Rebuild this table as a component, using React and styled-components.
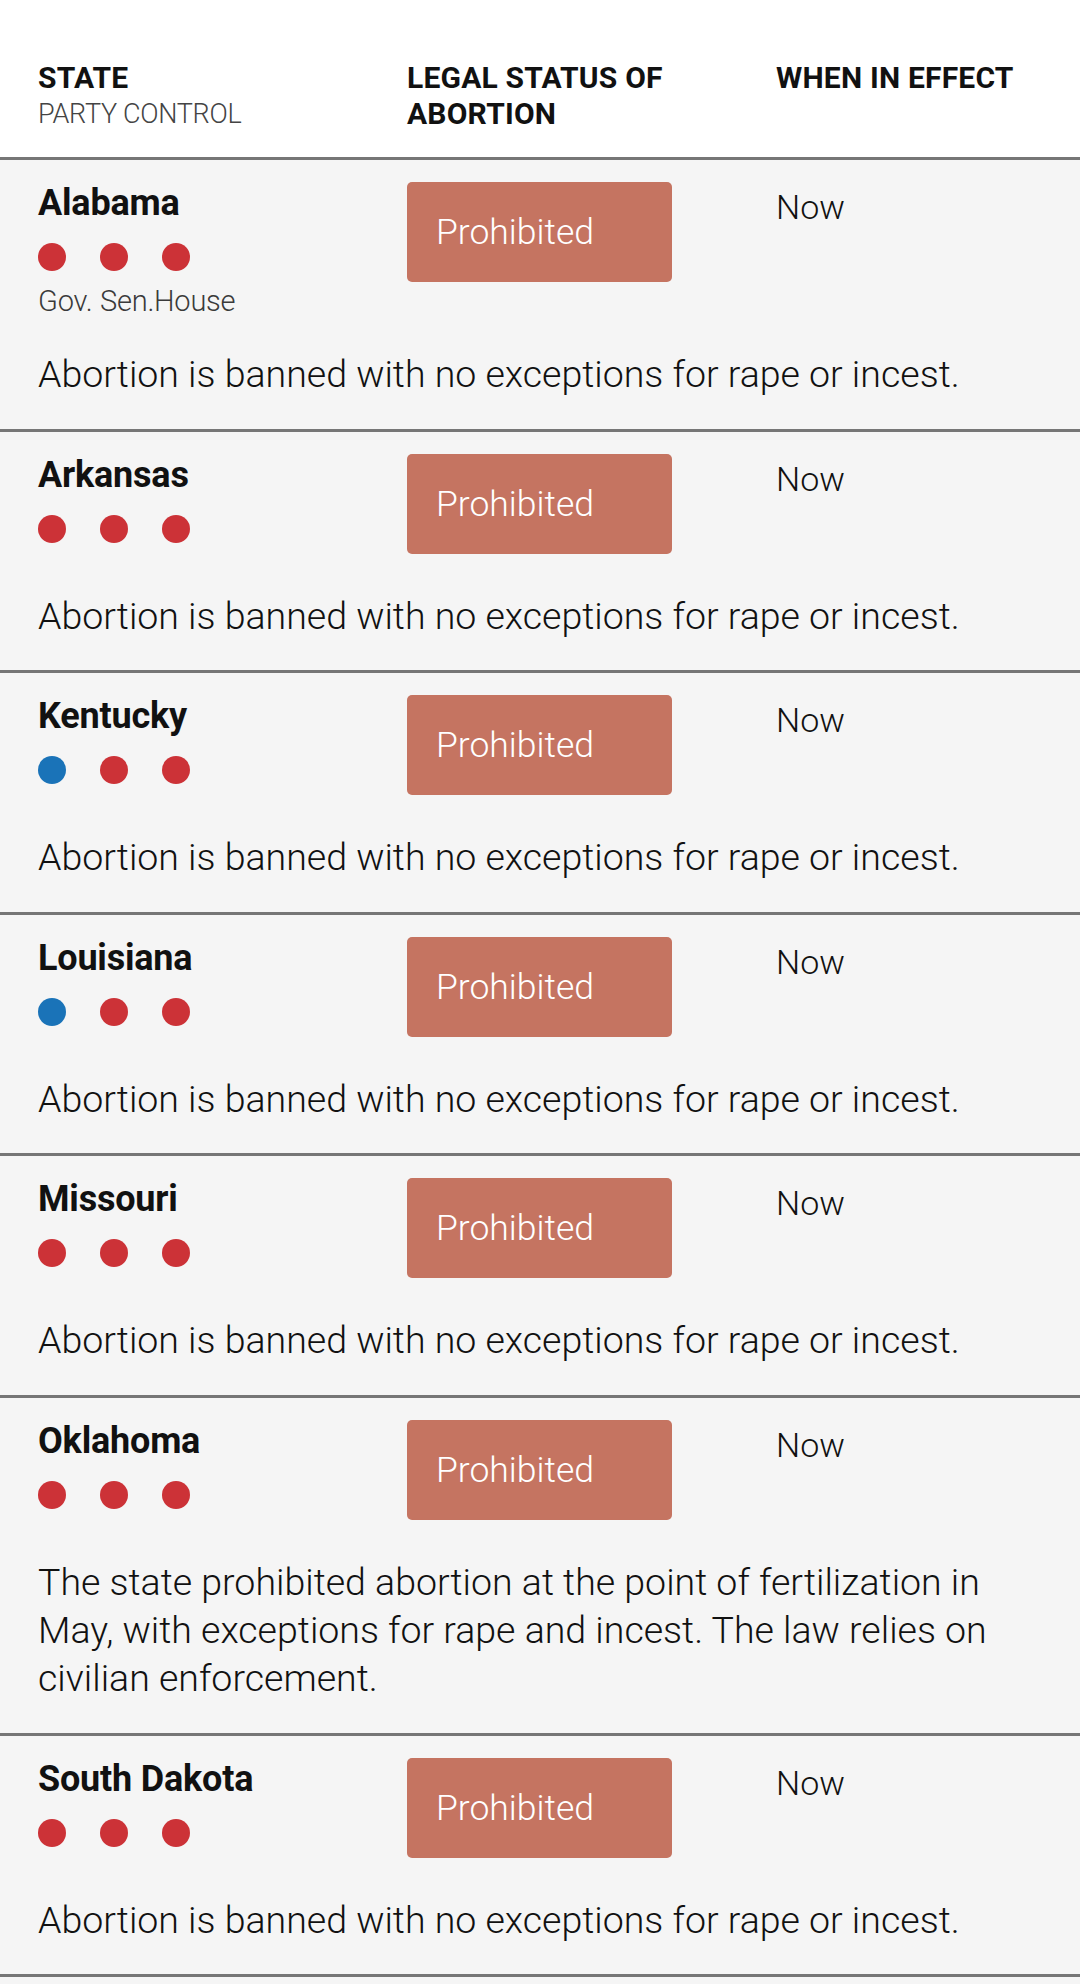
import React from 'react';
import styled, { createGlobalStyle } from 'styled-components';

const GlobalStyle = createGlobalStyle`
  html, body {
    margin: 0;
    padding: 0;
    background: #ffffff;
    font-family: Roboto, "Liberation Sans", sans-serif;
    color: #111;
  }
`;

const COLORS = {
  R: '#cc3237',
  D: '#1a73b8',
};

const rows = [
  {
    state: 'Alabama',
    party: ['R', 'R', 'R'],
    labels: true,
    note: 'Abortion is banned with no exceptions for rape or incest.',
  },
  { state: 'Arkansas', party: ['R', 'R', 'R'], note: 'Abortion is banned with no exceptions for rape or incest.' },
  { state: 'Kentucky', party: ['D', 'R', 'R'], note: 'Abortion is banned with no exceptions for rape or incest.' },
  { state: 'Louisiana', party: ['D', 'R', 'R'], note: 'Abortion is banned with no exceptions for rape or incest.' },
  { state: 'Missouri', party: ['R', 'R', 'R'], note: 'Abortion is banned with no exceptions for rape or incest.' },
  {
    state: 'Oklahoma',
    party: ['R', 'R', 'R'],
    note:
      'The state prohibited abortion at the point of fertilization in May, with exceptions for rape and incest. The law relies on civilian enforcement.',
  },
  { state: 'South Dakota', party: ['R', 'R', 'R'], note: 'Abortion is banned with no exceptions for rape or incest.' },
];

// page wrapper
const Page = styled.div`
  width: 1080px;
  min-height: 1984px;
  background: #f5f5f5;
`;

// column grid shared by header and rows
const Columns = styled.div`
  display: grid;
  grid-template-columns: 369px 369px 1fr;
  align-items: start;
`;

const Header = styled(Columns)`
  background: #fff;
  padding: 60px 38px 25px 38px;
  border-bottom: 3px solid #767676;
`;

const HeadCell = styled.div`
  display: flex;
  flex-direction: column;
`;

const HeadTitle = styled.div`
  font-size: 30px;
  line-height: 36px;
  font-weight: 700;
  color: #111;
  letter-spacing: 0.2px;
`;

const HeadSub = styled.div`
  font-size: 27px;
  line-height: 36px;
  font-weight: 300;
  color: #444;
  letter-spacing: -0.3px;
`;

const Row = styled.div`
  padding: 22px 38px 30.6px 38px;
  border-bottom: 3px solid #767676;
  background: #f5f5f5;
`;

const StateCol = styled.div`
  display: flex;
  flex-direction: column;
`;

const StateName = styled.div`
  font-size: 36px;
  line-height: 42px;
  font-weight: 700;
  color: #111;
  letter-spacing: -0.2px;
`;

const Dots = styled.div`
  display: flex;
  gap: 34px;
  margin-top: 19px;
`;

const Dot = styled.span`
  width: 28px;
  height: 28px;
  border-radius: 50%;
  background: ${({ $party }) => COLORS[$party]};
`;

const Labels = styled.div`
  display: flex;
  margin-top: 19px;
  font-size: 29px;
  line-height: 22px;
  font-weight: 300;
  color: #3a3a3a;
  letter-spacing: -0.2px;
`;

const Label = styled.span`
  width: ${({ $w }) => ($w ? `${$w}px` : 'auto')};
`;

const Status = styled.div`
  width: 265px;
  height: 100px;
  box-sizing: border-box;
  padding-left: 29px;
  display: flex;
  align-items: center;
  background: #c57461;
  border-radius: 5px;
  color: #fff;
  font-size: 35.5px;
  font-weight: 300;
`;

const When = styled.div`
  font-size: 34px;
  line-height: 42px;
  font-weight: 300;
  color: #111;
  margin-top: 4px;
`;

const Note = styled.p`
  margin: 38px 0 0 0;
  font-size: 37.5px;
  line-height: 48px;
  font-weight: 300;
  color: #111;
`;

const StateRow = ({ data }) => (
  <Row>
    <Columns>
      <StateCol>
        <StateName>{data.state}</StateName>
        <Dots>
          {data.party.map((p, i) => (
            <Dot key={i} $party={p} />
          ))}
        </Dots>
        {data.labels && (
          <Labels>
            <Label $w={62}>Gov.</Label>
            <Label $w={54}>Sen.</Label>
            <Label>House</Label>
          </Labels>
        )}
      </StateCol>
      <Status>Prohibited</Status>
      <When>Now</When>
    </Columns>
    <Note>{data.note}</Note>
  </Row>
);

export default function App() {
  return (
    <Page>
      <GlobalStyle />
      <Header>
        <HeadCell>
          <HeadTitle>STATE</HeadTitle>
          <HeadSub>PARTY CONTROL</HeadSub>
        </HeadCell>
        <HeadCell>
          <HeadTitle>LEGAL STATUS OF</HeadTitle>
          <HeadTitle>ABORTION</HeadTitle>
        </HeadCell>
        <HeadCell>
          <HeadTitle>WHEN IN EFFECT</HeadTitle>
        </HeadCell>
      </Header>
      {rows.map((r) => (
        <StateRow key={r.state} data={r} />
      ))}
    </Page>
  );
}
